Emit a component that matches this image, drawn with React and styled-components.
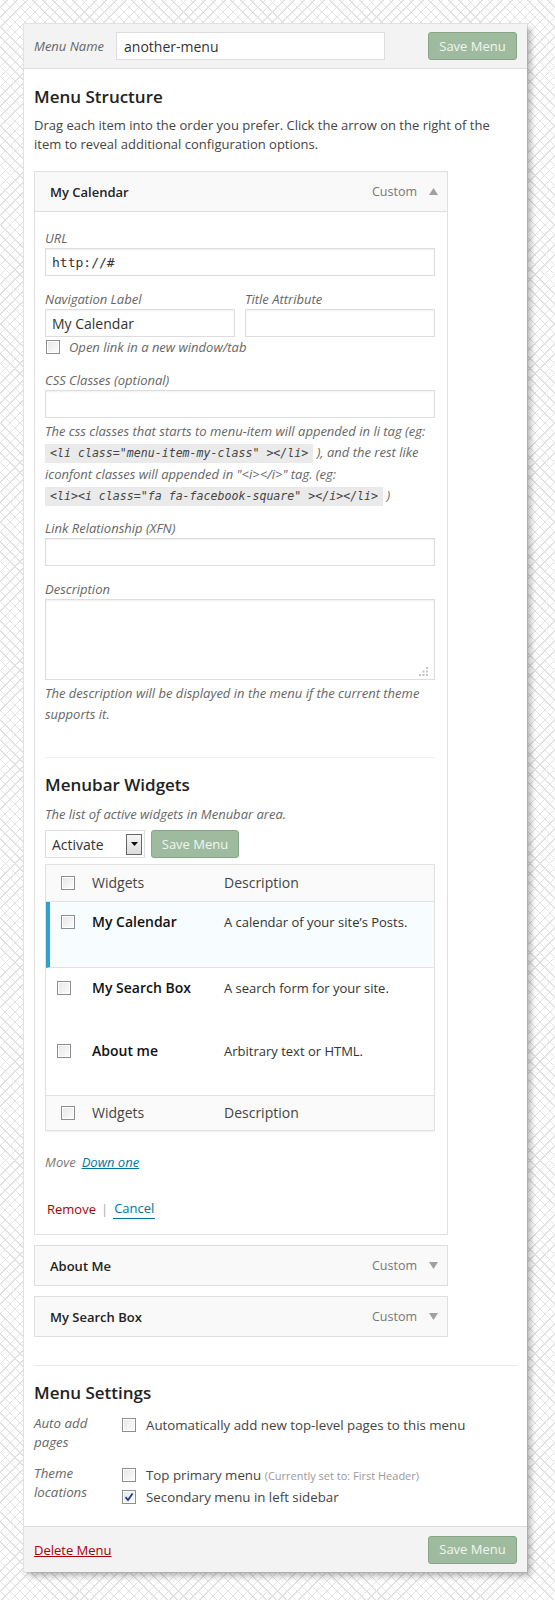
import styled, { createGlobalStyle } from "styled-components"

const GlobalStyle = createGlobalStyle`
    html, body {
        margin: 0;
        padding: 0;
    }
    body {
        font-family: "Open Sans", "Liberation Sans", sans-serif;
        font-size: 13px;
        color: #444;
        background-color: #fff;
        background-image:
            repeating-linear-gradient(45deg, transparent 0 6px, #e2e2e2 6px 7px),
            repeating-linear-gradient(-45deg, transparent 0 6px, #e2e2e2 6px 7px);
    }
`

function Checkbox({ checked }) {
    return (
        <StyledCheck>
            {checked && (
                <svg width="10" height="10" viewBox="0 0 10 10">
                    <path d="M1.5 5.2 L4 8 L8.6 1.4" fill="none" stroke="#1e3e8a" strokeWidth="1.8" />
                </svg>
            )}
        </StyledCheck>
    )
}

function Arrow({ up }) {
    return (
        <svg width="9" height="7" viewBox="0 0 9 7">
            {up ? <path d="M0 7 L4.5 0 L9 7 Z" fill="#a0a0a0" /> : <path d="M0 0 L9 0 L4.5 7 Z" fill="#a0a0a0" />}
        </svg>
    )
}

function MenuItem({ title, open, children }) {
    return (
        <ItemBox>
            <ItemHead $open={open}>
                <span className="title">{title}</span>
                <span className="type">Custom</span>
                <Arrow up={open} />
            </ItemHead>
            {open && <ItemContent>{children}</ItemContent>}
        </ItemBox>
    )
}

const widgets = [
    { name: "My Calendar", desc: "A calendar of your site\u2019s Posts.", active: true, h: 66 },
    { name: "My Search Box", desc: "A search form for your site.", h: 63 },
    { name: "About me", desc: "Arbitrary text or HTML.", h: 64 },
]

function App() {
    return (
        <>
            <GlobalStyle />
            <Page>
                <Panel>
                    <Bar>
                        <label className="name-label">Menu Name</label>
                        <NameInput>another-menu</NameInput>
                        <SaveButton>Save Menu</SaveButton>
                    </Bar>
                    <Body>
                        <SectionTitle>Menu Structure</SectionTitle>
                        <Intro>
                            Drag each item into the order you prefer. Click the arrow on the right of the item to reveal additional configuration options.
                        </Intro>
                        <ItemList>
                            <MenuItem title="My Calendar" open>
                                <Field>
                                    <FieldLabel>URL</FieldLabel>
                                    <TextField $mono>http://#</TextField>
                                </Field>
                                <HalfRow>
                                    <Field>
                                        <FieldLabel>Navigation Label</FieldLabel>
                                        <TextField>My Calendar</TextField>
                                    </Field>
                                    <Field>
                                        <FieldLabel>Title Attribute</FieldLabel>
                                        <TextField />
                                    </Field>
                                </HalfRow>
                                <CheckLine>
                                    <Checkbox />
                                    <em>Open link in a new window/tab</em>
                                </CheckLine>
                                <Field $gap="14px">
                                    <FieldLabel>CSS Classes (optional)</FieldLabel>
                                    <TextField />
                                    <Help>
                                        The css classes that starts to menu-item will appended in li tag (eg: <Code>&lt;li class="menu-item-my-class" &gt;&lt;/li&gt;</Code> ), and the rest like iconfont classes will appended in "&lt;i&gt;&lt;/i&gt;" tag. (eg: <Code>&lt;li&gt;&lt;i class="fa fa-facebook-square" &gt;&lt;/i&gt;&lt;/li&gt;</Code> )
                                    </Help>
                                </Field>
                                <Field $gap="12px">
                                    <FieldLabel>Link Relationship (XFN)</FieldLabel>
                                    <TextField />
                                </Field>
                                <Field $gap="14px">
                                    <FieldLabel>Description</FieldLabel>
                                    <TextArea>
                                        <svg width="9" height="9" viewBox="0 0 9 9">
                                            <g fill="#c4c4c4">
                                                <rect x="7" y="0" width="2" height="2" />
                                                <rect x="7" y="3.5" width="2" height="2" />
                                                <rect x="7" y="7" width="2" height="2" />
                                                <rect x="3.5" y="3.5" width="2" height="2" />
                                                <rect x="3.5" y="7" width="2" height="2" />
                                                <rect x="0" y="7" width="2" height="2" />
                                            </g>
                                        </svg>
                                    </TextArea>
                                    <Help>The description will be displayed in the menu if the current theme supports it.</Help>
                                </Field>
                                <Divider />
                                <WidgetsTitle>Menubar Widgets</WidgetsTitle>
                                <Help $sub>The list of active widgets in Menubar area.</Help>
                                <BulkRow>
                                    <Select>
                                        <span>Activate</span>
                                        <span className="drop">
                                            <svg width="7" height="4" viewBox="0 0 7 4"><path d="M0 0 L7 0 L3.5 4 Z" fill="#111" /></svg>
                                        </span>
                                    </Select>
                                    <SaveButton $small>Save Menu</SaveButton>
                                </BulkRow>
                                <Table>
                                    <TableRow $head>
                                        <CheckCell $head><Checkbox /></CheckCell>
                                        <NameCell>Widgets</NameCell>
                                        <DescCell $head>Description</DescCell>
                                    </TableRow>
                                    {widgets.map((w) => (
                                        <TableRow key={w.name} $active={w.active} $h={w.h}>
                                            <CheckCell $active={w.active}><Checkbox /></CheckCell>
                                            <NameCell $bold>{w.name}</NameCell>
                                            <DescCell>{w.desc}</DescCell>
                                        </TableRow>
                                    ))}
                                    <TableRow $head $foot>
                                        <CheckCell $head><Checkbox /></CheckCell>
                                        <NameCell>Widgets</NameCell>
                                        <DescCell $head>Description</DescCell>
                                    </TableRow>
                                </Table>
                                <MoveLine>
                                    <em>Move</em>
                                    <a href="#">Down one</a>
                                </MoveLine>
                                <Actions>
                                    <a className="remove" href="#">Remove</a>
                                    <span className="sep">|</span>
                                    <a className="cancel" href="#">Cancel</a>
                                </Actions>
                            </MenuItem>
                            <MenuItem title="About Me" />
                            <MenuItem title="My Search Box" />
                        </ItemList>
                        <Settings>
                            <SectionTitle $settings>Menu Settings</SectionTitle>
                            <SettingRow>
                                <dt>Auto add pages</dt>
                                <dd>
                                    <CheckLine $plain>
                                        <Checkbox />
                                        <span>Automatically add new top-level pages to this menu</span>
                                    </CheckLine>
                                </dd>
                            </SettingRow>
                            <SettingRow $last>
                                <dt>Theme locations</dt>
                                <dd>
                                    <CheckLine $plain>
                                        <Checkbox />
                                        <span>Top primary menu <small>(Currently set to: First Header)</small></span>
                                    </CheckLine>
                                    <CheckLine $plain>
                                        <Checkbox checked />
                                        <span>Secondary menu in left sidebar</span>
                                    </CheckLine>
                                </dd>
                            </SettingRow>
                        </Settings>
                    </Body>
                    <Bar $footer>
                        <a className="delete" href="#">Delete Menu</a>
                        <SaveButton>Save Menu</SaveButton>
                    </Bar>
                </Panel>
            </Page>
        </>
    )
}

const Page = styled.div`
    min-height: 1600px;
    padding: 24px 0 0 24px;
    box-sizing: border-box;
`

const Panel = styled.div`
    width: 503px;
    background: #fff;
    box-shadow: 4px 4px 6px rgba(0, 0, 0, 0.28), 0 0 0 1px #e6e6e6;
`

const Bar = styled.div`
    height: ${(p) => (p.$footer ? "46px" : "45px")};
    box-sizing: border-box;
    background: #f3f3f3;
    display: flex;
    align-items: center;
    padding: 0 10px;
    ${(p) => (p.$footer ? "border-top: 1px solid #dddddd;" : "border-bottom: 1px solid #dddddd;")}
    .name-label {
        font-style: italic;
        color: #666;
        margin-right: 12px;
    }
    .delete {
        color: #a00;
        text-decoration: underline;
        margin-right: auto;
        font-size: 13px;
    }
`

const NameInput = styled.div`
    width: 269px;
    height: 28px;
    box-sizing: border-box;
    border: 1px solid #ddd;
    background: #fff;
    display: flex;
    align-items: center;
    padding: 0 7px;
    font-size: 14px;
    color: #333;
    margin-right: auto;
`

const SaveButton = styled.button`
    width: ${(p) => (p.$small ? "88px" : "89px")};
    height: 28px;
    box-sizing: border-box;
    border: 1px solid #86a786;
    border-radius: 3px;
    background: #9fbb9f;
    color: #f1f6f1;
    font-family: "Open Sans", sans-serif;
    font-size: 13px;
    padding: 0 0 1px;
`

const Body = styled.div`
    padding: 16px 10px 18px;
`

const SectionTitle = styled.h2`
    margin: 0;
    font-size: 17px;
    font-weight: 600;
    color: #222;
    line-height: 24px;
    margin-bottom: ${(p) => (p.$settings ? "9px" : "7px")};
`

const Intro = styled.p`
    margin: 0 0 17px;
    line-height: 19px;
    color: #444;
`

const ItemList = styled.div`
    display: flex;
    flex-direction: column;
    gap: 10px;
    width: 414px;
`

const ItemBox = styled.div`
    border: 1px solid #dfdfdf;
    background: #fff;
`

const ItemHead = styled.div`
    height: 39px;
    background: #f9f9f9;
    display: flex;
    align-items: center;
    padding: 0 9px 0 15px;
    ${(p) => p.$open && "border-bottom: 1px solid #dfdfdf;"}
    .title {
        font-weight: 600;
        color: #222;
        flex: 1;
    }
    .type {
        color: #777;
        font-size: 12.5px;
        margin-right: 12px;
    }
`

const ItemContent = styled.div`
    padding: 17px 12px 15px 10px;
`

const Field = styled.div`
    display: flex;
    flex-direction: column;
    margin-top: ${(p) => p.$gap || "0"};
`

const FieldLabel = styled.label`
    font-style: italic;
    color: #666;
    line-height: 18px;
    margin-bottom: 1px;
`

const TextField = styled.div`
    height: 28px;
    box-sizing: border-box;
    border: 1px solid #ddd;
    box-shadow: inset 0 1px 2px rgba(0, 0, 0, 0.06);
    display: flex;
    align-items: center;
    padding: 0 6px;
    color: #333;
    font-family: ${(p) => (p.$mono ? '"DejaVu Sans Mono", "Liberation Mono", monospace' : '"Open Sans", sans-serif')};
    font-size: ${(p) => (p.$mono ? "13px" : "14px")};
`

const HalfRow = styled.div`
    display: grid;
    grid-template-columns: 1fr 1fr;
    gap: 10px;
    margin-top: 14px;
`

const CheckLine = styled.div`
    display: flex;
    align-items: center;
    gap: ${(p) => (p.$plain ? "10px" : "9px")};
    height: ${(p) => (p.$plain ? "22px" : "20px")};
    padding-left: ${(p) => (p.$plain ? "0" : "1px")};
    color: ${(p) => (p.$plain ? "#444" : "#666")};
    font-size: ${(p) => (p.$plain ? "13.3px" : "13px")};
    small {
        font-size: 11px;
        color: #999;
    }
`

const StyledCheck = styled.span`
    width: 12px;
    height: 12px;
    flex: none;
    display: inline-flex;
    align-items: center;
    justify-content: center;
    border: 1px solid #8e8e8e;
    background: linear-gradient(135deg, #e6e6e6, #fdfdfd);
    box-shadow: inset 0 0 0 1px #fff;
`

const Help = styled.p`
    margin: ${(p) => (p.$sub ? "7px 0 0" : "3px 0 0")};
    font-style: italic;
    color: #666;
    line-height: 21px;
`

const Code = styled.code`
    font-family: "DejaVu Sans Mono", "Liberation Mono", monospace;
    font-style: italic;
    font-size: 11.6px;
    background: #eaeaea;
    padding: 2px 5px 3px;
    color: #444;
    white-space: nowrap;
`

const TextArea = styled.div`
    height: 81px;
    box-sizing: border-box;
    border: 1px solid #ddd;
    box-shadow: inset 0 1px 2px rgba(0, 0, 0, 0.06);
    display: flex;
    align-items: flex-end;
    justify-content: flex-end;
    padding: 0 6px 3px 0;
`

const Divider = styled.hr`
    border: 0;
    border-top: 1px solid #eee;
    margin: 32px 0 15px;
`

const WidgetsTitle = styled.h3`
    margin: 0;
    font-size: 17px;
    font-weight: 600;
    color: #222;
    line-height: 24px;
`

const BulkRow = styled.div`
    display: flex;
    gap: 6px;
    align-items: center;
    margin: 5px 0 6px;
`

const Select = styled.div`
    width: 100px;
    height: 28px;
    box-sizing: border-box;
    border: 1px solid #ddd;
    display: flex;
    align-items: center;
    justify-content: space-between;
    padding: 0 2px 0 6px;
    color: #333;
    font-size: 14px;
    .drop {
        width: 16px;
        height: 21px;
        box-sizing: border-box;
        border: 1px solid #666;
        background: linear-gradient(#f6f6f6, #dcdcdc);
        display: flex;
        align-items: center;
        justify-content: center;
    }
`

const Table = styled.div`
    border: 1px solid #e1e1e1;
    box-shadow: 0 1px 1px rgba(0, 0, 0, 0.04);
`

const TableRow = styled.div`
    display: flex;
    align-items: ${(p) => (p.$head ? "center" : "flex-start")};
    height: ${(p) => (p.$head ? (p.$foot ? "35px" : "37px") : `${p.$h}px`)};
    padding-top: ${(p) => (p.$head ? "0" : "10px")};
    box-sizing: border-box;
    background: ${(p) => (p.$active ? "#f7fcfe" : p.$head ? "#fafafa" : "#fff")};
    border-left: ${(p) => (p.$active ? "4px solid #2ea2cc" : "0")};
    ${(p) => p.$head && !p.$foot && "border-bottom: 1px solid #e1e1e1;"}
    ${(p) => p.$foot && "border-top: 1px solid #e1e1e1;"}
    ${(p) => p.$active && "border-bottom: 1px solid #e1e1e1;"}
    font-size: 14px;
`

const CheckCell = styled.div`
    width: ${(p) => (p.$active ? "42px" : "46px")};
    padding-left: ${(p) => (p.$head ? "15px" : "11px")};
    box-sizing: border-box;
    display: flex;
    align-items: center;
    height: 20px;
`

const NameCell = styled.div`
    width: 132px;
    color: ${(p) => (p.$bold ? "#111" : "#444")};
    font-weight: ${(p) => (p.$bold ? "600" : "400")};
    line-height: 20px;
`

const DescCell = styled.div`
    flex: 1;
    color: ${(p) => (p.$head ? "#444" : "#333")};
    font-size: ${(p) => (p.$head ? "14px" : "13px")};
    line-height: 20px;
`

const MoveLine = styled.div`
    margin-top: 21px;
    display: flex;
    gap: 6px;
    line-height: 20px;
    em {
        color: #777;
    }
    a {
        color: #0074a2;
        font-style: italic;
        text-decoration: underline;
    }
`

const Actions = styled.div`
    margin-top: 26px;
    display: flex;
    align-items: center;
    gap: 5px;
    line-height: 20px;
    padding-left: 2px;
    .remove {
        color: #a00;
        text-decoration: none;
    }
    .sep {
        color: #aaa;
    }
    .cancel {
        color: #0074a2;
        text-decoration: none;
        border-bottom: 1px solid #0074a2;
        padding: 0 1px;
    }
`

const Settings = styled.div`
    margin-top: 28px;
    border-top: 1px solid #e8e8e8;
    padding-top: 15px;
`

const SettingRow = styled.dl`
    display: flex;
    margin: 0 0 ${(p) => (p.$last ? "0" : "13px")};
    dt {
        width: 88px;
        font-style: italic;
        color: #666;
        line-height: 18.5px;
        font-size: 13.3px;
    }
    dd {
        margin: 0;
        flex: 1;
    }
`

export default App
